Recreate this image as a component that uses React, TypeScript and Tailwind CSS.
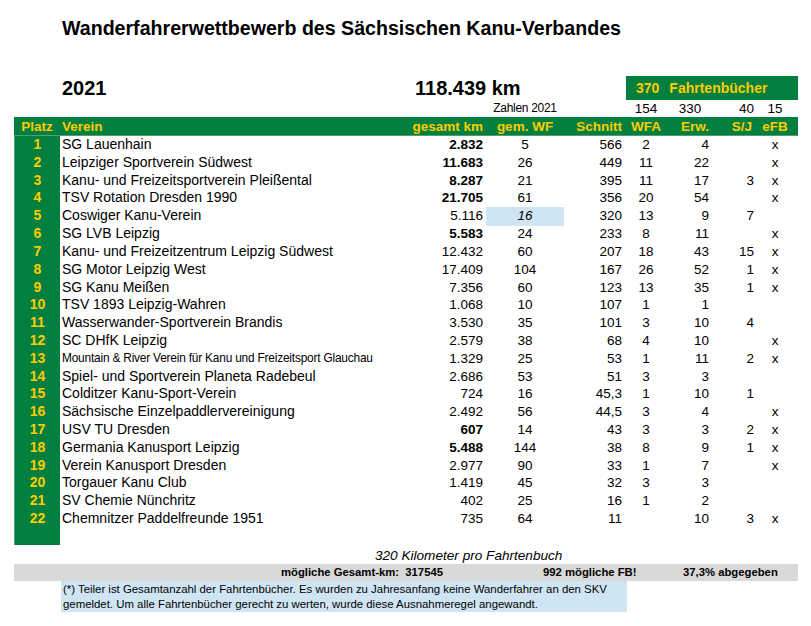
import React from "react"

interface Row {
  platz: number
  verein: string
  km: string
  kmBold?: boolean
  wf: string
  schnitt: string
  wfa: string
  erw: string
  sj: string
  efb: string
  small?: boolean
  highlight?: boolean
  line?: boolean
}

const rows: Row[] = [
  { platz: 1, verein: "SG Lauenhain", km: "2.832", kmBold: true, wf: "5", schnitt: "566", wfa: "2", erw: "4", sj: "", efb: "x" },
  { platz: 2, verein: "Leipziger Sportverein Südwest", km: "11.683", kmBold: true, wf: "26", schnitt: "449", wfa: "11", erw: "22", sj: "", efb: "x", line: true },
  { platz: 3, verein: "Kanu- und Freizeitsportverein Pleißental", km: "8.287", kmBold: true, wf: "21", schnitt: "395", wfa: "11", erw: "17", sj: "3", efb: "x" },
  { platz: 4, verein: "TSV Rotation Dresden 1990", km: "21.705", kmBold: true, wf: "61", schnitt: "356", wfa: "20", erw: "54", sj: "", efb: "x", line: true },
  { platz: 5, verein: "Coswiger Kanu-Verein", km: "5.116", wf: "16", schnitt: "320", wfa: "13", erw: "9", sj: "7", efb: "", highlight: true, line: true },
  { platz: 6, verein: "SG LVB Leipzig", km: "5.583", kmBold: true, wf: "24", schnitt: "233", wfa: "8", erw: "11", sj: "", efb: "x" },
  { platz: 7, verein: "Kanu- und Freizeitzentrum Leipzig Südwest", km: "12.432", wf: "60", schnitt: "207", wfa: "18", erw: "43", sj: "15", efb: "x" },
  { platz: 8, verein: "SG Motor Leipzig West", km: "17.409", wf: "104", schnitt: "167", wfa: "26", erw: "52", sj: "1", efb: "x" },
  { platz: 9, verein: "SG Kanu Meißen", km: "7.356", wf: "60", schnitt: "123", wfa: "13", erw: "35", sj: "1", efb: "x" },
  { platz: 10, verein: "TSV 1893 Leipzig-Wahren", km: "1.068", wf: "10", schnitt: "107", wfa: "1", erw: "1", sj: "", efb: "" },
  { platz: 11, verein: "Wasserwander-Sportverein Brandis", km: "3.530", wf: "35", schnitt: "101", wfa: "3", erw: "10", sj: "4", efb: "" },
  { platz: 12, verein: "SC DHfK Leipzig", km: "2.579", wf: "38", schnitt: "68", wfa: "4", erw: "10", sj: "", efb: "x" },
  { platz: 13, verein: "Mountain & River Verein für Kanu und Freizeitsport Glauchau", km: "1.329", wf: "25", schnitt: "53", wfa: "1", erw: "11", sj: "2", efb: "x", small: true },
  { platz: 14, verein: "Spiel- und Sportverein Planeta Radebeul", km: "2.686", wf: "53", schnitt: "51", wfa: "3", erw: "3", sj: "", efb: "" },
  { platz: 15, verein: "Colditzer Kanu-Sport-Verein", km: "724", wf: "16", schnitt: "45,3", wfa: "1", erw: "10", sj: "1", efb: "" },
  { platz: 16, verein: "Sächsische Einzelpaddlervereinigung", km: "2.492", wf: "56", schnitt: "44,5", wfa: "3", erw: "4", sj: "", efb: "x", line: true },
  { platz: 17, verein: "USV TU Dresden", km: "607", kmBold: true, wf: "14", schnitt: "43", wfa: "3", erw: "3", sj: "2", efb: "x", line: true },
  { platz: 18, verein: "Germania Kanusport Leipzig", km: "5.488", kmBold: true, wf: "144", schnitt: "38", wfa: "8", erw: "9", sj: "1", efb: "x" },
  { platz: 19, verein: "Verein Kanusport Dresden", km: "2.977", wf: "90", schnitt: "33", wfa: "1", erw: "7", sj: "", efb: "x" },
  { platz: 20, verein: "Torgauer Kanu Club", km: "1.419", wf: "45", schnitt: "32", wfa: "3", erw: "3", sj: "", efb: "" },
  { platz: 21, verein: "SV Chemie Nünchritz", km: "402", wf: "25", schnitt: "16", wfa: "1", erw: "2", sj: "", efb: "" },
  { platz: 22, verein: "Chemnitzer Paddelfreunde 1951", km: "735", wf: "64", schnitt: "11", wfa: "", erw: "10", sj: "3", efb: "x", line: true },
]

const grid = "grid grid-cols-[46px_350px_76px_78px_60px_44px_44px_44px_42px]"

export default function App() {
  return (
    <div className="w-[811px] h-[626px] bg-white text-black font-['Liberation_Sans',Arial,sans-serif] overflow-hidden">
      {/* Title */}
      <h1 className="pl-[62px] pt-[17px] h-[76px] text-[19.6px] leading-[22px] font-bold">
        Wanderfahrerwettbewerb des Sächsischen Kanu-Verbandes
      </h1>

      <div className="ml-[14px] w-[784px]">
        {/* Year / total */}
        <div className={`${grid} h-[24px] items-center`}>
          <div />
          <div className="pl-[2px] text-[20px] font-bold leading-[24px]">2021</div>
          <div className="col-span-3 pl-[5px] text-[20px] font-bold leading-[24px] whitespace-nowrap">118.439 km</div>
          <div className="col-span-4 ml-[2px] h-[24px] bg-[#007f3e] text-[#ffcc00] text-[14px] font-bold flex items-center gap-[10px] pl-[10px]">
            <span>370</span>
            <span>Fahrtenbücher</span>
          </div>
        </div>

        {/* Counts */}
        <div className={`${grid} h-[17px] items-center text-[13.5px] leading-[17px]`}>
          <div />
          <div />
          <div />
          <div className="text-center text-[12px] tracking-[-0.3px]">Zahlen 2021</div>
          <div />
          <div className="text-center">154</div>
          <div className="text-center">330</div>
          <div className="text-right pr-[2px]">40</div>
          <div className="text-center pr-[4px]">15</div>
        </div>

        {/* Header */}
        <div className={`${grid} h-[19px] bg-[#007f3e] text-[#ffcc00] font-bold text-[13.5px] leading-[19px] border-b border-[#4f9d70]`}>
          <div className="text-center">Platz</div>
          <div className="pl-[2px]">Verein</div>
          <div className="text-right pr-[3px]">gesamt km</div>
          <div className="text-center">gem. WF</div>
          <div className="text-right pr-[2px]">Schnitt</div>
          <div className="text-center">WFA</div>
          <div className="text-right pr-[3px]">Erw.</div>
          <div className="text-right pr-[4px]">S/J</div>
          <div className="text-center pr-[4px]">eFB</div>
        </div>

        {/* Rows */}
        {rows.map((r) => (
          <div key={r.platz} className={`${grid} h-[17.82px] text-[13.5px] leading-[17.82px]`}>
            <div
              className={`bg-[#007f3e] text-[#ffcc00] font-bold text-[14px] text-center border-l border-[#5aa57c] ${
                r.line ? "border-b border-b-[#4f9d70]" : ""
              }`}
            >
              {r.platz}
            </div>
            <div className={`pl-[2px] whitespace-nowrap ${r.small ? "text-[11.9px] tracking-[-0.2px]" : "text-[14px]"}`}>
              {r.verein}
            </div>
            <div className={`text-right pr-[3px] ${r.kmBold ? "font-bold" : ""}`}>{r.km}</div>
            <div className={`text-center ${r.highlight ? "bg-[#d0e5f4] italic" : ""}`}>{r.wf}</div>
            <div className="text-right pr-[2px]">{r.schnitt}</div>
            <div className="text-center">{r.wfa}</div>
            <div className="text-right pr-[3px]">{r.erw}</div>
            <div className="text-right pr-[2px]">{r.sj}</div>
            <div className="text-center pr-[4px]">{r.efb}</div>
          </div>
        ))}

        {/* Empty platz cell */}
        <div className={`${grid} h-[17px]`}>
          <div className="bg-[#007f3e] border-l border-[#5aa57c]" />
        </div>
      </div>

      {/* Footer */}
      <div className="h-[19px] pt-[1px] pl-[375px] text-[13.6px] italic leading-[19px]">320 Kilometer pro Fahrtenbuch</div>

      <div className="ml-[14px] w-[784px] h-[17px] bg-[#d9d9d9] grid grid-cols-[267px_262px_140px_115px] text-[11.3px] font-bold leading-[17px]">
        <div />
        <div className="whitespace-pre">mögliche Gesamt-km:  317545</div>
        <div>992 mögliche FB!</div>
        <div>37,3% abgegeben</div>
      </div>

      <div className="ml-[61px] w-[566px] h-[31px] bg-[#d0e5f4] pl-[2px] pt-[1px] text-[11.4px] leading-[15px]">
        <p>(*) Teiler ist Gesamtanzahl der Fahrtenbücher. Es wurden zu Jahresanfang keine Wanderfahrer an den SKV</p>
        <p>gemeldet. Um alle Fahrtenbücher gerecht zu werten, wurde diese Ausnahmeregel angewandt.</p>
      </div>
    </div>
  )
}
